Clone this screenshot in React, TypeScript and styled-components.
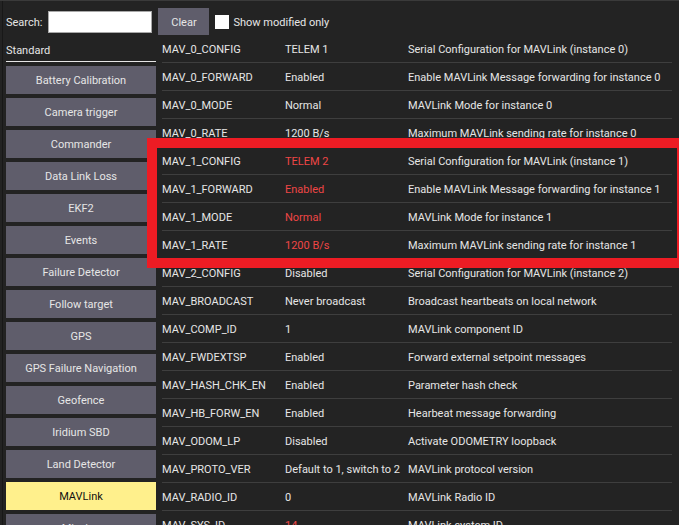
import React from "react";
import styled, { createGlobalStyle } from "styled-components";

const Global = createGlobalStyle`
  html, body { margin: 0; padding: 0; background: #232323; }
  body { font-family: Roboto, "Liberation Sans", sans-serif; font-size: 11px; color: #e6e6e6; }
  * { box-sizing: border-box; }
`;

const Page = styled.div`
  position: relative;
  width: 679px;
  height: 525px;
  overflow: hidden;
  background: #232323;
  border-top: 1px solid #3a3a3a;
  padding-left: 2px;
`;

const Frame = styled.div`
  height: 100%;
  border-left: 1px solid #181818;
  padding-left: 3px;
  padding-right: 7px;
  display: flex;
  flex-direction: column;
`;

const Toolbar = styled.div`
  height: 34px;
  padding-top: 7px;
  display: flex;
  align-items: center;
`;

const Label = styled.span`
  margin-right: 6px;
  padding-top: 1px;
  color: #e6e6e6;
`;

const SearchInput = styled.input`
  width: 104px;
  height: 22px;
  border: 1px solid #a8a8a8;
  background: #fff;
  margin: 0 6px 0 0;
  padding: 0 3px;
  font: inherit;
  color: #000;
  outline: none;
`;

const ClearButton = styled.button`
  width: 51px;
  height: 27px;
  border: none;
  background: #5f5d6b;
  color: #e6e6e6;
  font: inherit;
  margin-right: 6px;
  padding: 1px 0 0;
`;

const Check = styled.span`
  width: 14px;
  height: 14px;
  background: #fff;
  margin-right: 4px;
`;

const Body = styled.div`
  display: grid;
  grid-template-columns: 150px 1fr;
  column-gap: 6px;
  flex: 1;
  min-height: 0;
`;

const Sidebar = styled.div`
  display: flex;
  flex-direction: column;
  gap: 4px;
`;

const GroupTitle = styled.div`
  height: 27px;
  padding-top: 9px;
  line-height: 14px;
  border-bottom: 1px solid #e6e6e6;
  color: #e6e6e6;
`;

const GroupButton = styled.div<{ $active?: boolean }>`
  flex: 0 0 28px;
  height: 28px;
  display: flex;
  align-items: center;
  justify-content: center;
  padding-top: 1px;
  background: ${(p) => (p.$active ? "#fff08c" : "#5f5d6b")};
  color: ${(p) => (p.$active ? "#111" : "#e6e6e6")};
`;

const Table = styled.div`
  display: flex;
  flex-direction: column;
`;

const Row = styled.div`
  flex: 0 0 28px;
  height: 28px;
  display: grid;
  grid-template-columns: 123px 123px 1fr;
  align-items: center;
  padding-top: 2px;
  border-bottom: 1px solid #3e3e3e;
  white-space: nowrap;
`;

const Cell = styled.span<{ $modified?: boolean }>`
  color: ${(p) => (p.$modified ? "#ef4646" : "#e6e6e6")};
  overflow: visible;
`;

const Highlight = styled.div`
  position: absolute;
  left: 147px;
  top: 137px;
  width: 540px;
  height: 130px;
  border: 10px solid #ed1c24;
  pointer-events: none;
`;

const groups = [
  "Battery Calibration",
  "Camera trigger",
  "Commander",
  "Data Link Loss",
  "EKF2",
  "Events",
  "Failure Detector",
  "Follow target",
  "GPS",
  "GPS Failure Navigation",
  "Geofence",
  "Iridium SBD",
  "Land Detector",
  "MAVLink",
  "Mission",
];

type P = [string, string, string, boolean?];
const params: P[] = [
  ["MAV_0_CONFIG", "TELEM 1", "Serial Configuration for MAVLink (instance 0)"],
  ["MAV_0_FORWARD", "Enabled", "Enable MAVLink Message forwarding for instance 0"],
  ["MAV_0_MODE", "Normal", "MAVLink Mode for instance 0"],
  ["MAV_0_RATE", "1200 B/s", "Maximum MAVLink sending rate for instance 0"],
  ["MAV_1_CONFIG", "TELEM 2", "Serial Configuration for MAVLink (instance 1)", true],
  ["MAV_1_FORWARD", "Enabled", "Enable MAVLink Message forwarding for instance 1", true],
  ["MAV_1_MODE", "Normal", "MAVLink Mode for instance 1", true],
  ["MAV_1_RATE", "1200 B/s", "Maximum MAVLink sending rate for instance 1", true],
  ["MAV_2_CONFIG", "Disabled", "Serial Configuration for MAVLink (instance 2)"],
  ["MAV_BROADCAST", "Never broadcast", "Broadcast heartbeats on local network"],
  ["MAV_COMP_ID", "1", "MAVLink component ID"],
  ["MAV_FWDEXTSP", "Enabled", "Forward external setpoint messages"],
  ["MAV_HASH_CHK_EN", "Enabled", "Parameter hash check"],
  ["MAV_HB_FORW_EN", "Enabled", "Hearbeat message forwarding"],
  ["MAV_ODOM_LP", "Disabled", "Activate ODOMETRY loopback"],
  ["MAV_PROTO_VER", "Default to 1, switch to 2", "MAVLink protocol version"],
  ["MAV_RADIO_ID", "0", "MAVLink Radio ID"],
  ["MAV_SYS_ID", "14", "MAVLink system ID", true],
];

export default function App() {
  return (
    <>
      <Global />
      <Page>
        <Frame>
          <Toolbar>
            <Label>Search:</Label>
            <SearchInput type="text" />
            <ClearButton>Clear</ClearButton>
            <Check />
            <Label>Show modified only</Label>
          </Toolbar>
          <Body>
            <Sidebar>
              <GroupTitle>Standard</GroupTitle>
              {groups.map((g) => (
                <GroupButton key={g} $active={g === "MAVLink"}>
                  {g}
                </GroupButton>
              ))}
            </Sidebar>
            <Table>
              {params.map(([name, value, desc, mod]) => (
                <Row key={name}>
                  <Cell>{name}</Cell>
                  <Cell $modified={mod}>{value}</Cell>
                  <Cell>{desc}</Cell>
                </Row>
              ))}
            </Table>
          </Body>
        </Frame>
        <Highlight />
      </Page>
    </>
  );
}
